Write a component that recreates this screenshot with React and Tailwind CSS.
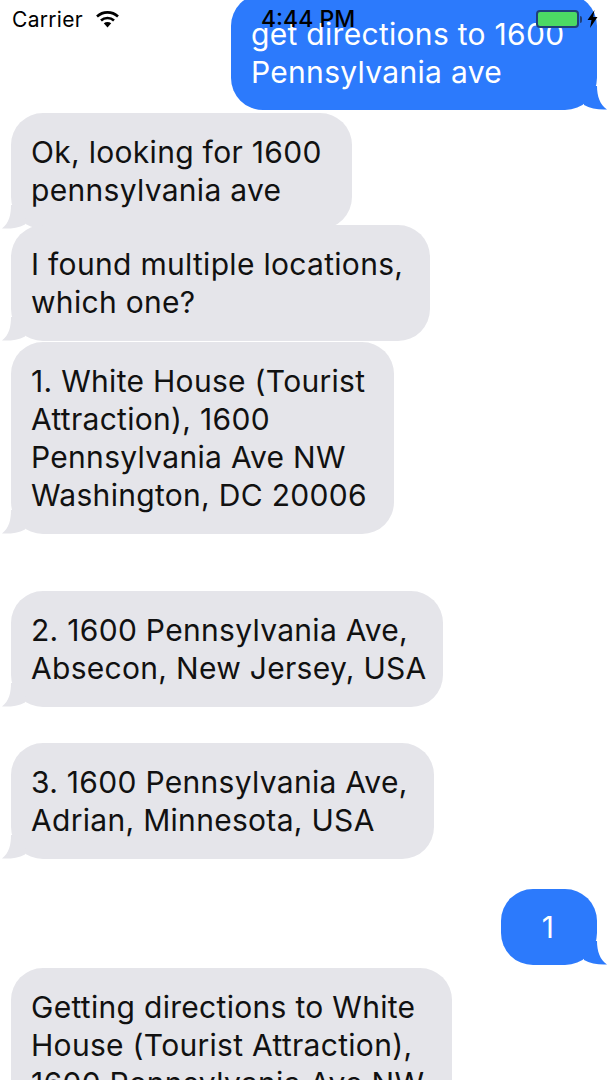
const Tail = ({ side, color }) => {
  if (side === 'right') {
    return (
      <svg className="absolute right-[-11px] bottom-0" width="24" height="24" viewBox="0 0 24 24">
        <path d="M13 0 C13 10 16 19 23 23.5 C15 24 6 22.5 0 19 L0 0 Z" fill={color} />
      </svg>
    );
  }
  return (
    <svg className="absolute left-[-9px] bottom-0" width="24" height="24" viewBox="0 0 24 24">
      <path d="M9 0 C9 10 7 18 0 23.5 C8 24 16 23 23 19.5 L24 10 L24 0 Z" fill={color} />
    </svg>
  );
};

const Bubble = ({ side = 'left', lines, className = '' }) => {
  const isRight = side === 'right';
  const color = isRight ? '#2c7afc' : '#e5e5ea';
  return (
    <div
      className={`relative rounded-[32px] px-5 text-[30px] leading-[38px] tracking-[0.3px] whitespace-nowrap ${
        isRight ? 'self-end mr-[11px] bg-[#2c7afc] text-white' : 'self-start ml-[11px] bg-[#e5e5ea] text-[#111111]'
      } ${className}`}
    >
      <Tail side={side} color={color} />
      <div className="relative">
        {lines.map((line) => (
          <div key={line}>{line}</div>
        ))}
      </div>
    </div>
  );
};

const StatusBar = () => (
  <div className="absolute top-0 left-0 right-0 z-10 h-10 text-black">
    <div className="absolute left-3 top-[8px] text-[21px] leading-6 tracking-[0.3px]">Carrier</div>
    <svg className="absolute left-[96px] top-[10px]" width="23" height="18" viewBox="0 0 23 18">
      <path d="M1 6.5 C7 1 16 1 22 6.5" fill="none" stroke="#000" strokeWidth="2.6" />
      <path d="M5 10.5 C8.5 7.2 14.5 7.2 18 10.5" fill="none" stroke="#000" strokeWidth="2.6" />
      <path d="M11.5 17.5 L7.8 13.2 C10 11.6 13 11.6 15.2 13.2 Z" fill="#000" />
    </svg>
    <div className="absolute left-[261px] top-[7px] text-[23px] leading-6 font-medium">4:44 PM</div>
    <div className="absolute left-[536px] top-[10px] h-[18px] w-[43px] rounded-[4px] border-2 border-[#1f3f7a] bg-[#4cd964]" />
    <div className="absolute left-[580px] top-[16px] h-[7px] w-[2px] rounded-r-sm bg-[#1f3f7a]" />
    <svg className="absolute left-[587px] top-[10px]" width="11" height="18" viewBox="0 0 11 18">
      <path d="M7.5 0 L0.5 10 L4.5 10 L3 18 L10.5 7 L6.2 7 Z" fill="#000" />
    </svg>
  </div>
);

export default function App() {
  return (
    <div className="relative flex h-[1080px] w-[608px] flex-col overflow-hidden bg-white font-['Inter','Liberation_Sans',sans-serif]">
      <StatusBar />
      <Bubble side="right" lines={['get directions to 1600', 'Pennsylvania ave']} className="-mt-[6px] w-[366px] pt-[21px] pb-[19px]" />
      <Bubble lines={['Ok, looking for 1600', 'pennsylvania ave']} className="mt-[3px] w-[341px] py-5" />
      <Bubble lines={['I found multiple locations,', 'which one?']} className="-mt-1 w-[419px] py-5" />
      <Bubble
        lines={['1. White House (Tourist', 'Attraction), 1600', 'Pennsylvania Ave NW', 'Washington, DC 20006']}
        className="mt-px w-[383px] py-5"
      />
      <Bubble lines={['2. 1600 Pennsylvania Ave,', 'Absecon, New Jersey, USA']} className="mt-[57px] w-[432px] py-5" />
      <Bubble lines={['3. 1600 Pennsylvania Ave,', 'Adrian, Minnesota, USA']} className="mt-9 w-[423px] py-5" />
      <Bubble side="right" lines={['1']} className="mt-[30px] w-[96px] pl-[19px] pr-[21px] py-[19px] text-center" />
      <Bubble
        lines={['Getting directions to White', 'House (Tourist Attraction),', '1600 Pennsylvania Ave NW']}
        className="mt-[3px] w-[441px] py-5"
      />
    </div>
  );
}
